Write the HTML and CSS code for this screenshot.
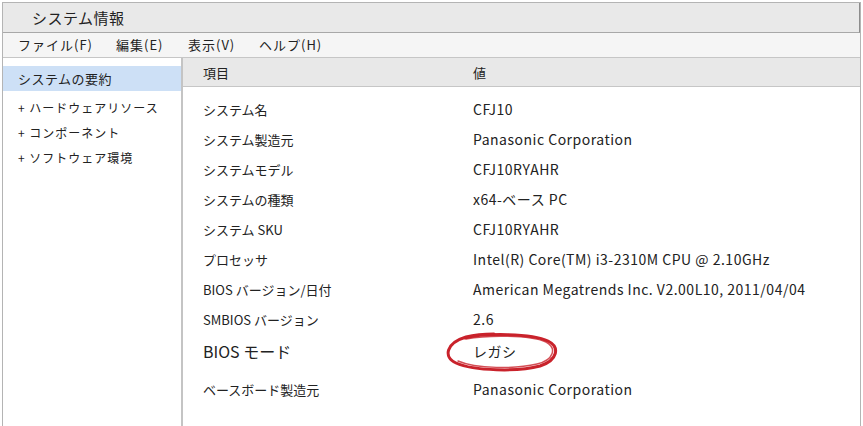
FILE: index.html
```html
<!DOCTYPE html>
<html lang="ja">
<head>
  <meta charset="UTF-8">
  <title>システム情報</title>
  <link rel="stylesheet" href="styles.css">
</head>
<body>
  <div class="window">
    <div class="titlebar">システム情報</div>

    <div class="menubar">
      <span class="menu-item">ファイル(F)</span>
      <span class="menu-item">編集(E)</span>
      <span class="menu-item">表示(V)</span>
      <span class="menu-item">ヘルプ(H)</span>
    </div>

    <div class="main">
      <!-- Tree -->
      <div class="sidebar">
        <div class="tree-item selected">システムの要約</div>
        <div class="tree-list">
          <div class="tree-item">+ ハードウェアリソース</div>
          <div class="tree-item">+ コンポーネント</div>
          <div class="tree-item">+ ソフトウェア環境</div>
        </div>
      </div>

      <!-- Details -->
      <div class="content">
        <div class="row header">
          <span>項目</span>
          <span>値</span>
        </div>
        <div class="rows">
          <div class="row"><span>システム名</span><span class="value">CFJ10</span></div>
          <div class="row"><span>システム製造元</span><span class="value">Panasonic Corporation</span></div>
          <div class="row"><span>システムモデル</span><span class="value">CFJ10RYAHR</span></div>
          <div class="row"><span>システムの種類</span><span class="value">x64-ベース PC</span></div>
          <div class="row"><span>システム SKU</span><span class="value">CFJ10RYAHR</span></div>
          <div class="row"><span>プロセッサ</span><span class="value">Intel(R) Core(TM) i3-2310M CPU @ 2.10GHz</span></div>
          <div class="row"><span>BIOS バージョン/日付</span><span class="value">American Megatrends Inc. V2.00L10, 2011/04/04</span></div>
          <div class="row"><span>SMBIOS バージョン</span><span class="value">2.6</span></div>
          <div class="row big">
            <span>BIOS モード</span>
            <span class="value marked">レガシ
              <svg class="circle" width="117" height="40" viewBox="0 0 117 40">
                <path d="M20 6 C40 1 88 1 104 9 C116 15 114 28 96 34 C74 40 30 39 12 31 C-1 25 2 11 22 5 C30 3 40 2 50 2"
                      fill="none" stroke="#c9222b" stroke-width="3" stroke-linecap="round"/>
                <path d="M22 7 C44 3 86 3 102 10 C113 16 110 28 93 32 C72 37 32 37 14 29"
                      fill="none" stroke="#c9222b" stroke-width="1.5" stroke-linecap="round" opacity="0.8"/>
              </svg>
            </span>
          </div>
          <div class="row"><span>ベースボード製造元</span><span class="value">Panasonic Corporation</span></div>
        </div>
      </div>
    </div>
  </div>
</body>
</html>
```

FILE: styles.css
```css
html, body {
  margin: 0;
  height: 100%;
}
body {
  font-family: "Noto Sans CJK JP", "Noto Sans", sans-serif;
  font-size: 13px;
  color: #222;
  background: #ffffff;
}
.window {
  margin: 2px 2px 0 2px;
  height: calc(100% - 2px);
  border: 1px solid #b4b4b4;
  border-bottom: none;
  display: flex;
  flex-direction: column;
  box-sizing: border-box;
}
.titlebar {
  height: 29px;
  line-height: 29px;
  padding-left: 29px;
  font-size: 15px;
  letter-spacing: 0.5px;
  background: #e9e9e9;
  border-bottom: 1px solid #a8a8a8;
  border-right: 1px solid #8c8c8c;
}
.menubar {
  height: 24px;
  line-height: 24px;
  padding-left: 15px;
  background: #f5f5f5;
  border-bottom: 1px solid #c6c6c6;
  display: flex;
  letter-spacing: 1px;
}
.menu-item:nth-child(1) { width: 98px; }
.menu-item:nth-child(2) { width: 72px; }
.menu-item:nth-child(3) { width: 71px; }
.main {
  flex: 1;
  display: flex;
  min-height: 0;
}
.sidebar {
  width: 178px;
  border-right: 2px solid #c4c4c4;
  padding-top: 8px;
}
.tree-item {
  height: 25px;
  line-height: 25px;
  padding-left: 15px;
  font-size: 12px;
  letter-spacing: 1px;
}
.tree-item.selected {
  background: #cde0f6;
  font-size: 13px;
  letter-spacing: 0.5px;
}
.tree-list {
  margin-top: 4px;
}
.content {
  flex: 1;
}
.row {
  display: grid;
  grid-template-columns: 270px 1fr;
  height: 30px;
  align-items: center;
  padding-left: 20px;
}
.row.header {
  height: 28px;
  background: #e8e8e8;
  border-bottom: 1px solid #c6c6c6;
}
.rows {
  padding-top: 7px;
}
.row.big {
  height: 34px;
  font-size: 16px;
  margin-bottom: 6px;
}
.value {
  font-size: 14px;
  letter-spacing: 0.5px;
}
.marked {
  position: relative;
}
.circle {
  position: absolute;
  left: -29px;
  top: -9px;
}
```
